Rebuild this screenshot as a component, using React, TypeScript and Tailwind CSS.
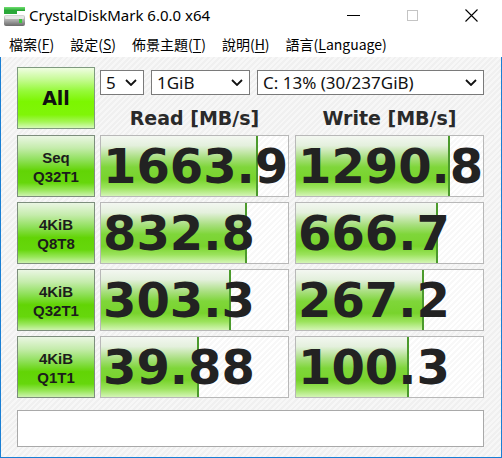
import React from "react";

const rows = [
  { l1: "Seq", l2: "Q32T1", r: "1663.9", rw: 157, w: "1290.8", ww: 154 },
  { l1: "4KiB", l2: "Q8T8", r: "832.8", rw: 146, w: "666.7", ww: 142 },
  { l1: "4KiB", l2: "Q32T1", r: "303.3", rw: 130, w: "267.2", ww: 128 },
  { l1: "4KiB", l2: "Q1T1", r: "39.88", rw: 98, w: "100.3", ww: 113 },
];

function Chevron() {
  return (
    <svg width="12" height="7" viewBox="0 0 12 7" className="shrink-0">
      <path d="M1 1 L6 6 L11 1" fill="none" stroke="#111" strokeWidth="1.8" />
    </svg>
  );
}

function Select({ w, text }: { w: string; text: string }) {
  return (
    <div
      className={`${w} h-[25px] bg-white border border-[#7a7a7a] flex items-center justify-between pl-[5px] pr-[6px] text-[17px] text-[#111] leading-none`}
      style={{ fontFamily: '"Noto Sans", "Open Sans", sans-serif' }}
    >
      <span>{text}</span>
      <Chevron />
    </div>
  );
}

function ValueTile({ value, fill, cls }: { value: string; fill: number; cls?: string }) {
  return (
    <div className={`relative w-[189px] h-[62px] border border-[#b8b8b8] bg-[repeating-linear-gradient(135deg,#ffffff_0px,#ffffff_2px,#f8f8f8_2px,#f8f8f8_4px)] overflow-hidden ${cls ?? ""}`}>
      <div
        className="absolute left-0 top-0 bottom-0 border-r-2 border-[#4b9a2c] bg-[linear-gradient(to_bottom,#f3f7f1_0%,#e4f0dd_16%,#a9df80_36%,#7fd63a_52%,#78d32c_72%,#9be35c_86%,#d4f5b6_100%)]"
        style={{ width: fill }}
      />
      <div
        className="relative h-full flex items-center pl-[2px] text-[48px] font-bold text-[#222] leading-none"
        style={{ fontFamily: '"DejaVu Sans", Verdana, sans-serif' }}
      >
        {value}
      </div>
    </div>
  );
}

function LabelTile({ l1, l2 }: { l1: string; l2: string }) {
  return (
    <div
      className="w-[78px] h-[62px] border border-[#7d8e7d] bg-[linear-gradient(to_bottom,#eaf6e3_0%,#c5ecac_20%,#8fe05a_40%,#62d405_58%,#66d70c_78%,#98e75a_90%,#cdf3ae_100%)] flex flex-col items-center justify-center text-[15px] font-bold text-[#1c1c1c] leading-[19px] pt-[1px]"
      style={{ fontFamily: '"Liberation Sans", Arial, sans-serif' }}
    >
      <span>{l1}</span>
      <span>{l2}</span>
    </div>
  );
}

function DriveIcon() {
  return (
    <svg width="21" height="19" viewBox="0 0 21 19">
      <defs>
        <linearGradient id="g1" x1="0" y1="0" x2="0" y2="1">
          <stop offset="0" stopColor="#6fe06f" />
          <stop offset="1" stopColor="#1f9f2f" />
        </linearGradient>
        <linearGradient id="g2" x1="0" y1="0" x2="0" y2="1">
          <stop offset="0" stopColor="#d8d8d8" />
          <stop offset="0.5" stopColor="#a8a8a8" />
          <stop offset="1" stopColor="#6a6a6a" />
        </linearGradient>
      </defs>
      <rect x="0" y="0" width="21" height="4" fill="url(#g1)" />
      <rect x="0" y="4" width="13" height="3" fill="#2aa83a" />
      <rect x="0" y="8" width="21" height="11" rx="2" fill="url(#g2)" />
      <rect x="1" y="9" width="19" height="3" rx="1" fill="#e6e6e6" />
      <rect x="15" y="12" width="3" height="4" fill="#3cc83c" />
    </svg>
  );
}

export default function App() {
  const cjk = '"Noto Sans CJK TC", "Noto Sans", sans-serif';
  const menu: [string, string, string][] = [
    ["檔案(", "F", ")"],
    ["設定(", "S", ")"],
    ["佈景主題(", "T", ")"],
    ["說明(", "H", ")"],
    ["語言(", "L", "anguage)"],
  ];
  return (
    <div className="w-[502px] h-[458px] bg-white flex flex-col overflow-hidden">
      {/* Title bar */}
      <div className="h-[31px] flex items-center bg-white shrink-0">
        <div className="ml-[4px] mt-[1px]">
          <DriveIcon />
        </div>
        <div
          className="ml-[4px] text-[15px] text-[#000] leading-none"
          style={{ fontFamily: '"Noto Sans", "Open Sans", sans-serif' }}
        >
          CrystalDiskMark 6.0.0 x64
        </div>
        <div className="flex-1" />
        <div className="w-[59px] h-[31px] flex items-center justify-center">
          <div className="w-[13px] h-[1px] bg-black" />
        </div>
        <div className="w-[59px] h-[31px] flex items-center justify-center">
          <div className="w-[11px] h-[11px] border border-[#c4c4c4]" />
        </div>
        <div className="w-[59px] h-[31px] flex items-center justify-center mr-[1px]">
          <svg width="13" height="13" viewBox="0 0 13 13">
            <path d="M0.5 0.5 L12.5 12.5 M12.5 0.5 L0.5 12.5" stroke="#000" strokeWidth="1.1" />
          </svg>
        </div>
      </div>
      {/* Menu bar */}
      <div
        className="h-[26px] flex items-center pl-[9px] gap-[16px] text-[14px] text-[#000] bg-white shrink-0 leading-none"
        style={{ fontFamily: cjk }}
      >
        {menu.map(([a, u, b]) => (
          <span key={a}>
            {a}
            <span className="underline underline-offset-2">{u}</span>
            {b}
          </span>
        ))}
      </div>
      {/* Content */}
      <div className="flex-1 border-l border-r border-b border-[#1a7fd4] bg-[repeating-linear-gradient(135deg,#f7f7f7_0px,#f7f7f7_2px,#f0f0f0_2px,#f0f0f0_4px)] pt-[10px] pl-[16px]">
        {/* Top row */}
        <div className="flex h-[62px]">
          <div
            className="w-[78px] h-[62px] border border-[#7f9a7f] bg-[linear-gradient(to_bottom,#effde2_0%,#c9fb9a_18%,#96fa3a_38%,#7cf600_56%,#80f508_78%,#a6f65a_90%,#d6fbb8_100%)] flex items-center justify-center text-[19px] font-bold text-[#111]"
            style={{ fontFamily: '"DejaVu Sans", Verdana, sans-serif' }}
          >
            All
          </div>
          <div className="ml-[5px] w-[384px] flex flex-col">
            <div className="mt-[3px] flex gap-[7px]">
              <Select w="w-[44px]" text="5" />
              <Select w="w-[99px]" text="1GiB" />
              <Select w="w-[227px]" text="C: 13% (30/237GiB)" />
            </div>
            <div
              className="flex-1 flex items-center text-[19px] font-bold text-[#2a2a2a] pt-[9px]"
              style={{ fontFamily: '"DejaVu Sans", Verdana, sans-serif' }}
            >
              <div className="w-[189px] text-center">Read [MB/s]</div>
              <div className="w-[189px] ml-[6px] text-center">Write [MB/s]</div>
            </div>
          </div>
        </div>
        {/* Result rows */}
        <div className="mt-[6px] flex flex-col gap-[5px]">
          {rows.map((r) => (
            <div key={r.r} className="flex">
              <LabelTile l1={r.l1} l2={r.l2} />
              <ValueTile value={r.r} fill={r.rw} cls="ml-[5px]" />
              <ValueTile value={r.w} fill={r.ww} cls="ml-[6px]" />
            </div>
          ))}
        </div>
        {/* Status */}
        <div className="mt-[12px] w-[467px] h-[37px] bg-white border border-[#a9a9a9]" />
      </div>
    </div>
  );
}
